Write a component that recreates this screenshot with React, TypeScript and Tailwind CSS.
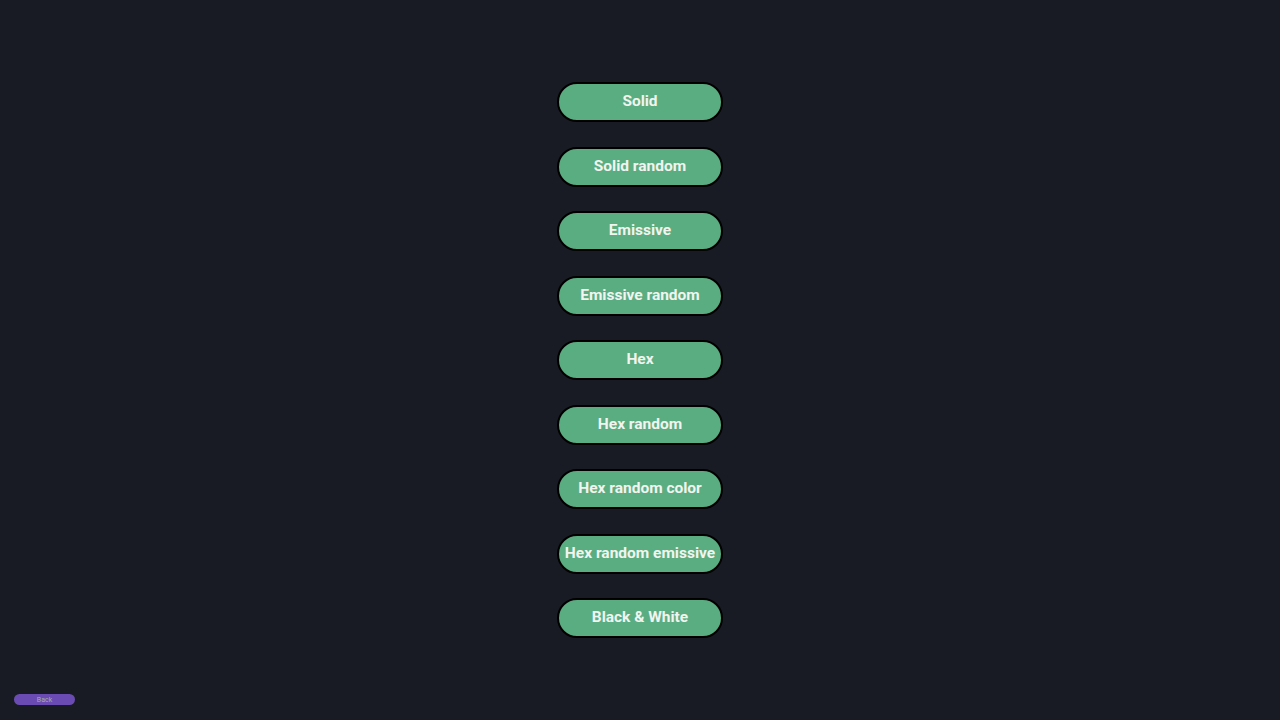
const options = [
  "Solid",
  "Solid random",
  "Emissive",
  "Emissive random",
  "Hex",
  "Hex random",
  "Hex random color",
  "Hex random emissive",
  "Black & White",
];

export default function App() {
  return (
    <div
      className="relative w-full h-[720px] bg-[#181b23] overflow-hidden"
      style={{ fontFamily: "Roboto, 'Liberation Sans', sans-serif" }}
    >
      <div className="flex flex-col items-center gap-[24.5px] pt-[82px]">
        {options.map((label) => (
          <button
            key={label}
            className="w-[166px] h-[40px] rounded-full border-2 border-black bg-[#5aad80] text-[#f1f4ef] text-[15.5px] font-bold leading-none whitespace-nowrap"
          >
            {label}
          </button>
        ))}
      </div>

      {/* back button */}
      <button className="absolute left-[14px] top-[694px] w-[61px] h-[11px] rounded-full bg-[#6a4bb3] text-[7px] leading-none text-[#9fb09a] pt-[1px]">
        Back
      </button>
    </div>
  );
}
